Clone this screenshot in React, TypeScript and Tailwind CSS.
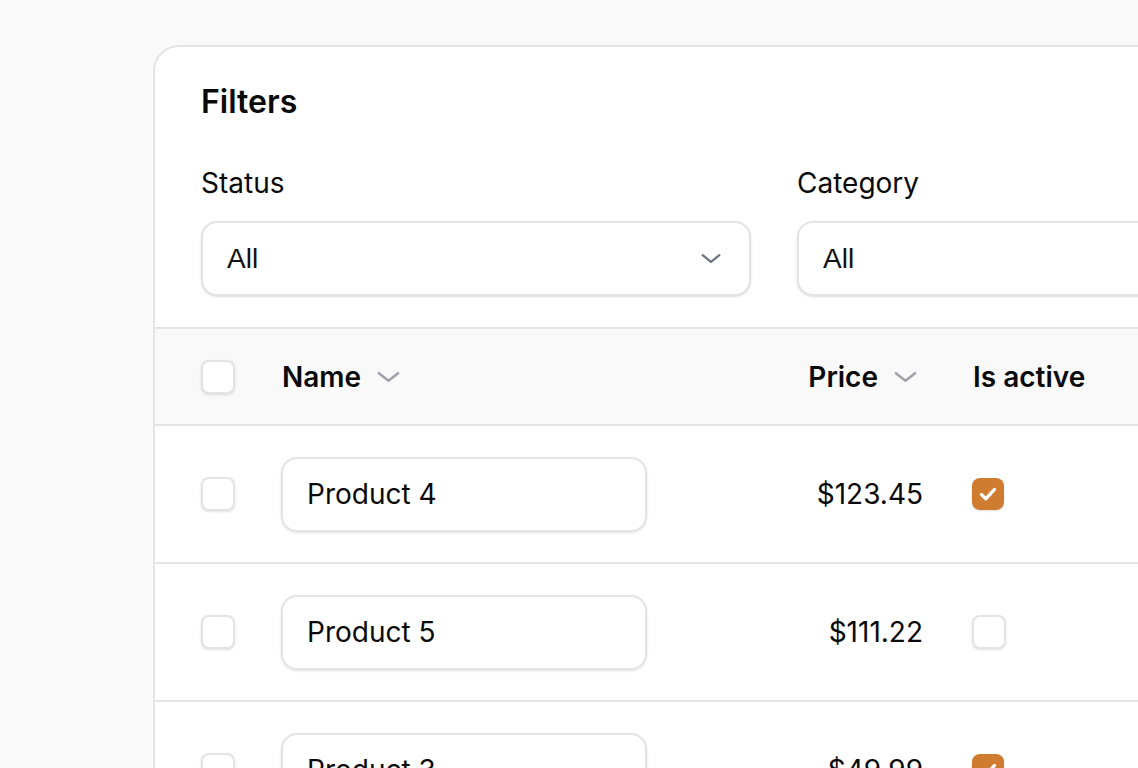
import React from 'react';

type Product = { name: string; price: string; active: boolean };

const products: Product[] = [
  { name: 'Product 4', price: '$123.45', active: true },
  { name: 'Product 5', price: '$111.22', active: false },
  { name: 'Product 3', price: '$49.99', active: true },
];

const font = { fontFamily: 'Inter, "Noto Sans", sans-serif' };

const Chevron: React.FC<{ className?: string }> = ({ className }) => (
  <svg viewBox="0 0 24 12" fill="none" className={className}>
    <path d="M2 2l10 8 10-8" stroke="currentColor" strokeWidth="2.6" strokeLinecap="round" strokeLinejoin="round" />
  </svg>
);

const Checkbox: React.FC<{ checked?: boolean }> = ({ checked }) =>
  checked ? (
    <div className="w-[32px] h-[32px] rounded-[8px] bg-[#cf7c30] flex items-center justify-center shadow-sm">
      <svg viewBox="0 0 20 20" className="w-[26px] h-[26px]" fill="none">
        <path d="M5 10.5l3.3 3.2L15 6.5" stroke="white" strokeWidth="2.6" strokeLinecap="round" strokeLinejoin="round" />
      </svg>
    </div>
  ) : (
    <div className="w-[34px] h-[34px] rounded-[8px] border-2 border-[#e4e4e7] bg-white shadow-sm" />
  );

const Select: React.FC<{ chevron?: boolean }> = ({ chevron }) => (
  <div className="h-[75px] rounded-[16px] border-2 border-[#e4e4e7] bg-white flex items-center justify-between pl-[24px] pr-[28px] shadow-sm">
    <span className="text-[28px] text-[#111]" style={{ fontFamily: '"Liberation Sans", Arial, sans-serif' }}>All</span>
    {chevron && <Chevron className="w-[20px] h-[11px] text-[#6b7280]" />}
  </div>
);

export default function App() {
  return (
    <div className="min-h-screen bg-[#fafafa] overflow-hidden" style={font}>
      <div className="pt-[45px] pl-[153px]">
        <div className="w-[1400px] h-[900px] bg-white border-2 border-[#e4e4e7] rounded-[26px] text-[#0a0a0a]">
          {/* Filters */}
          <div className="px-[46px] pt-[30px] pb-[31px]">
            <h2 className="text-[32px] leading-[50px] font-semibold">Filters</h2>
            <div className="mt-[38px] grid grid-cols-[550px_550px] gap-x-[46px]">
              <div>
                <div className="text-[28px] leading-[36px]">Status</div>
                <div className="mt-[20px]"><Select chevron /></div>
              </div>
              <div>
                <div className="text-[28px] leading-[36px]">Category</div>
                <div className="mt-[20px]"><Select /></div>
              </div>
            </div>
          </div>

          {/* Table header */}
          <div className="h-[99px] border-y-2 border-[#e4e4e7] bg-[#f9f9f9] flex items-center">
            <div className="w-[126px] pl-[46px]"><Checkbox /></div>
            <div className="w-[440px] flex items-center gap-[16px] pl-[1px]">
              <span className="text-[28px] font-semibold">Name</span>
              <Chevron className="w-[23px] h-[12px] text-[#a1a1aa]" />
            </div>
            <div className="w-[202px] flex items-center justify-end gap-[16px] pr-[6px]">
              <span className="text-[28px] font-semibold">Price</span>
              <Chevron className="w-[23px] h-[12px] text-[#a1a1aa]" />
            </div>
            <div className="pl-[50px]">
              <span className="text-[28px] font-semibold">Is active</span>
            </div>
          </div>

          {/* Rows */}
          {products.map((p) => (
            <div key={p.name} className="h-[138px] border-b-2 border-[#e4e4e7] flex items-center">
              <div className="w-[126px] pl-[46px]"><Checkbox /></div>
              <div className="w-[440px]">
                <div className="w-[366px] h-[75px] rounded-[16px] border-2 border-[#e4e4e7] flex items-center pl-[24px] shadow-sm">
                  <span className="text-[28px]">{p.name}</span>
                </div>
              </div>
              <div className="w-[202px] text-right text-[28px]">{p.price}</div>
              <div className="pl-[49px] flex items-center">
                <Checkbox checked={p.active} />
              </div>
            </div>
          ))}
        </div>
      </div>
    </div>
  );
}
